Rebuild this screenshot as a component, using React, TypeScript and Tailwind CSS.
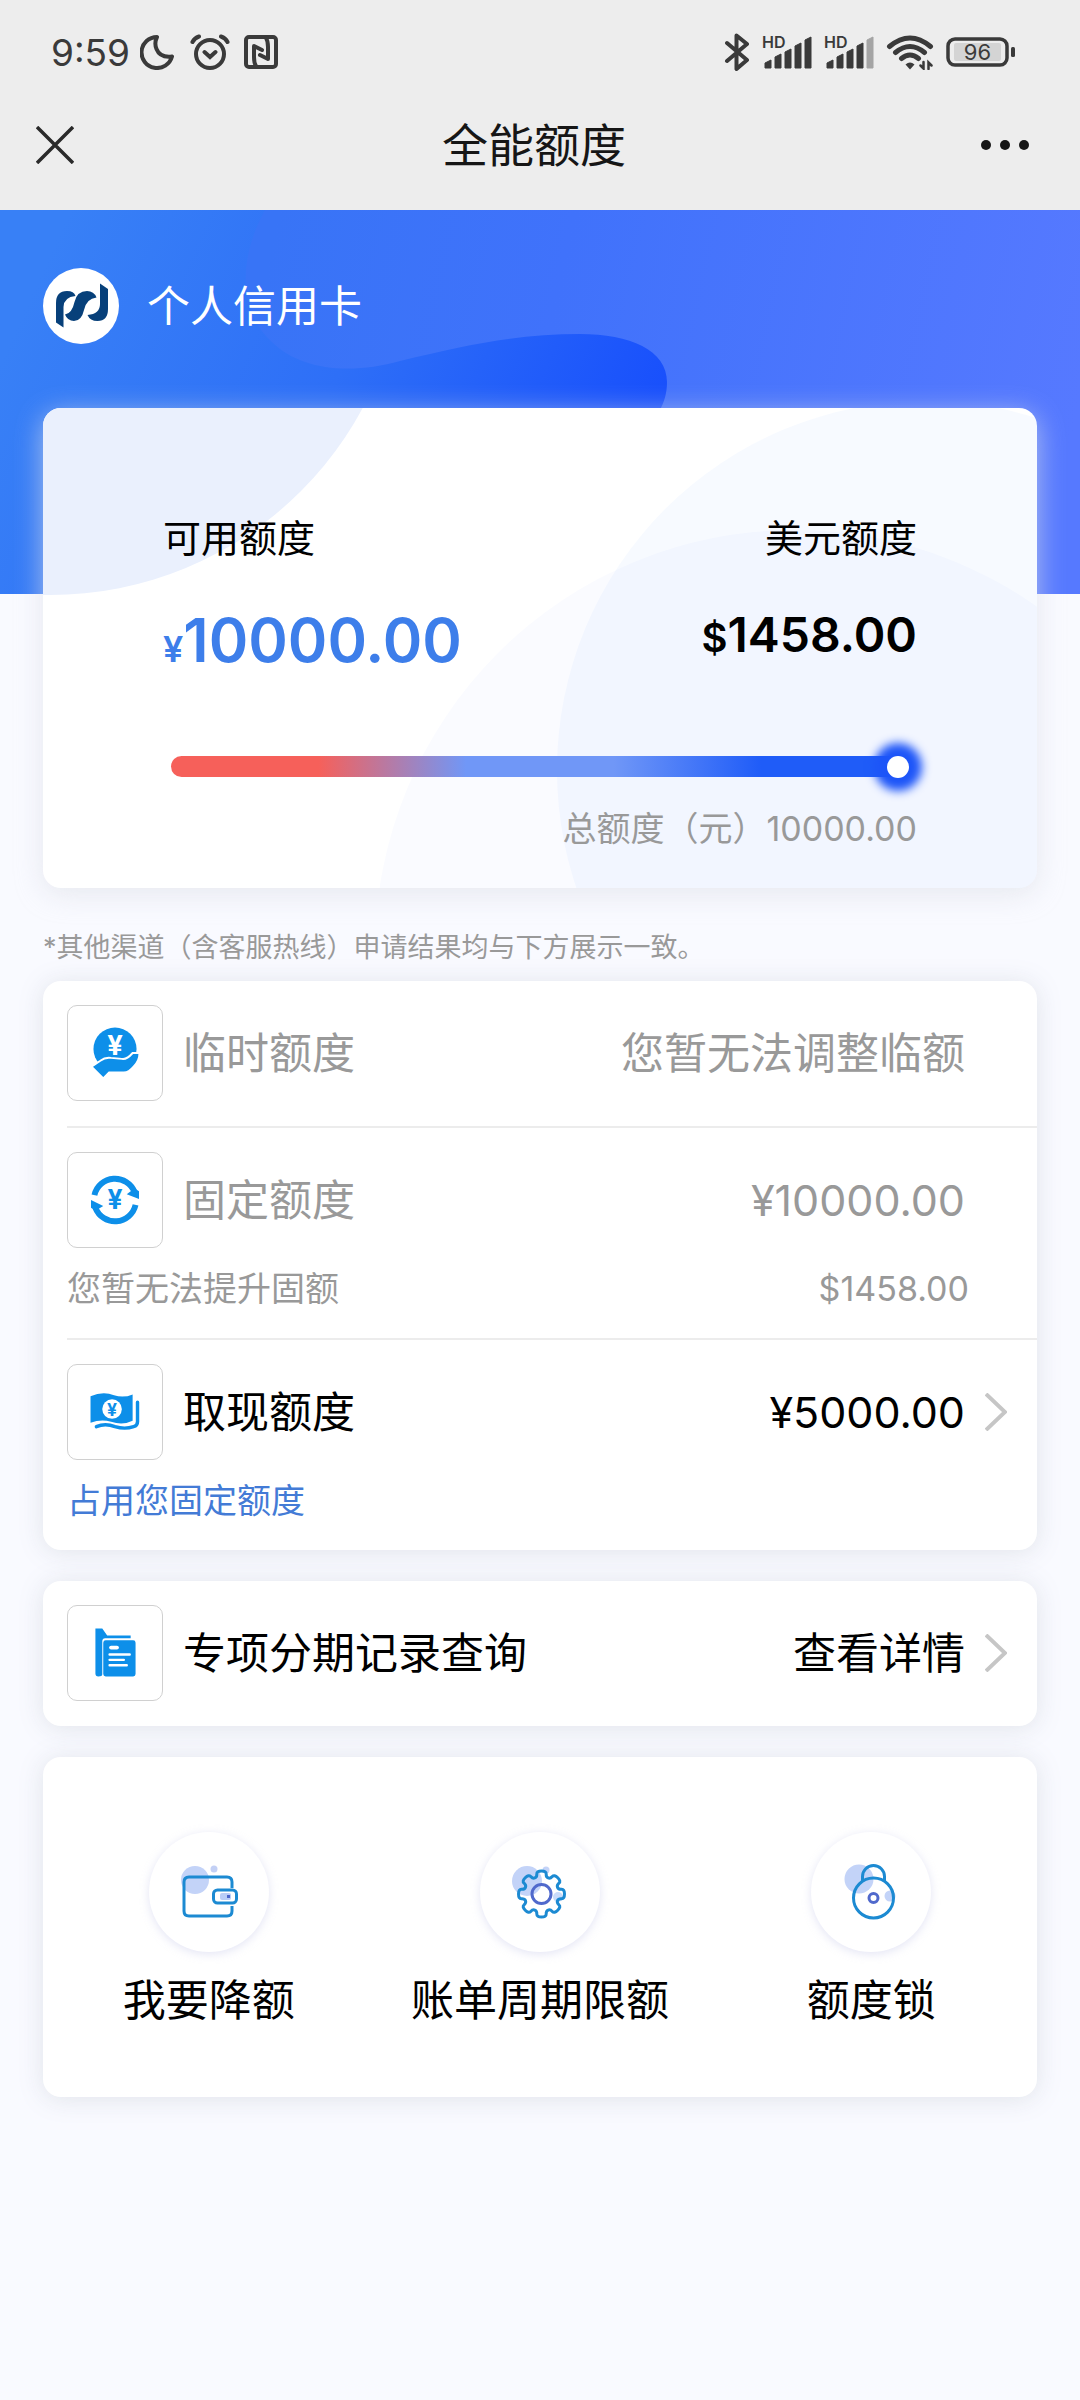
import type { ReactNode } from 'react'

const SHADOW = 'shadow-[0_2px_24px_rgba(222,225,232,0.9)]'

function StatusBar() {
  return (
    <div className="flex h-[104px] items-center justify-between pr-16 pl-[51px] text-[#3a3a3a]">
      <div className="flex items-center gap-[14px]">
        <span className="-mr-1 text-[37px] leading-none">9:59</span>
        <svg className="h-9 w-9" viewBox="0 0 36 36" fill="none" stroke="currentColor" strokeWidth="4" strokeLinejoin="round">
          <path d="M17 3A15.5 15.5 0 1 0 32 22.5Q20 24 16.5 15Q14 9 17 3Z" />
        </svg>
        <svg className="h-9 w-10" viewBox="0 0 40 36" fill="none" stroke="currentColor" strokeWidth="4" strokeLinecap="round">
          <circle cx="20" cy="20" r="14" />
          <path d="M14.5 18L20 23L25.5 18M2.500 8Q4.500 4 9 2.500M37.500 8Q35.500 4 31 2.500" />
        </svg>
        <svg className="h-[34px] w-[34px]" viewBox="0 0 34 34" fill="none" stroke="currentColor" strokeWidth="4" strokeLinecap="round" strokeLinejoin="round">
          <rect x="2" y="2" width="30" height="30" rx="3" />
          <path d="M12 31Q10 28 10 22V11L18 15M22 3Q24 6 24 12V24L16 20" />
        </svg>
      </div>
      <div className="flex items-center gap-3">
        <svg className="h-[38px] w-[26px]" viewBox="0 0 26 38" fill="none" stroke="currentColor" strokeWidth="4" strokeLinecap="round" strokeLinejoin="round">
          <path d="M3 10L23 27L12.500 36V2.500L23 11L3 28" />
        </svg>
        <Signal bars={5} />
        <Signal bars={4} />
        <svg className="h-9 w-12" viewBox="0 0 48 36" fill="none" stroke="currentColor" strokeWidth="5" strokeLinecap="round">
          <path d="M3.500 12.500Q24 -4.500 44.500 12.500M9.500 18.500Q24 6.500 38.500 18.500M15.500 24.500Q24 17.500 32.500 24.500" />
          <path d="M19.500 30.500Q24 26.500 28.500 30.500L24 35.500Z" fill="currentColor" stroke="none" />
          <path d="M37.500 28V34.500L34.500 31.500M42.500 35V28.500L45.500 31.500" strokeWidth="2.500" />
        </svg>
        <svg className="h-[30px] w-[70px]" viewBox="0 0 70 30" fill="none">
          <rect x="2" y="2" width="59" height="26" rx="7" stroke="currentColor" strokeWidth="3.500" />
          <rect x="8" y="6" width="47" height="18" rx="2" fill="#d4d4d4" />
          <rect x="65" y="10" width="4" height="10" rx="1.500" fill="currentColor" />
          <text x="31.500" y="23" textAnchor="middle" fontSize="22" fill="currentColor">96</text>
        </svg>
      </div>
    </div>
  )
}

function Signal({ bars }: { bars: number }) {
  const tops = [26, 20, 15, 9, 3]
  return (
    <svg className="h-[42px] w-[50px]" viewBox="0 -3 50 42" fill="currentColor">
      <text x="0" y="14" fontSize="16" fontWeight="600">HD</text>
      {tops.map((top, i) => {
        const x = 3 + i * 10
        return (
          <path
            key={top}
            d={`M${x} 34V${top + 3}L${x + 6} ${top}V34Z`}
            stroke="currentColor"
            strokeWidth="1"
            strokeLinejoin="round"
            opacity={i < bars ? 1 : 0.4}
          />
        )
      })}
    </svg>
  )
}

function NavBar() {
  return (
    <nav className="grid h-[82px] grid-cols-[1fr_auto_1fr] items-center pr-12 pl-9 text-[#161616]">
      <button type="button" aria-label="关闭" className="justify-self-start">
        <svg className="h-[38px] w-[38px]" viewBox="0 0 38 38" stroke="#2a2a2a" strokeWidth="3.500">
          <path d="M1 1L37 37M37 1L1 37" />
        </svg>
      </button>
      <h1 className="text-[46px] leading-[60px]">全能额度</h1>
      <button type="button" aria-label="更多" className="justify-self-end">
        <svg className="h-3 w-[52px]" viewBox="0 0 52 12" fill="currentColor">
          <circle cx="6" cy="6" r="5" />
          <circle cx="25" cy="6" r="5" />
          <circle cx="44" cy="6" r="5" />
        </svg>
      </button>
    </nav>
  )
}

function HeroBackground() {
  return (
    <svg className="absolute inset-x-0 top-0 h-96 w-full" viewBox="0 0 1080 384" preserveAspectRatio="none">
      <defs>
        <linearGradient id="heroBase" x1="0" y1="0.400" x2="0.620" y2="0.500">
          <stop offset="0" stopColor="#3880f6" />
          <stop offset="0.500" stopColor="#2e6ff7" />
          <stop offset="1" stopColor="#184ffc" />
        </linearGradient>
        <linearGradient id="heroWave" x1="0" y1="0.400" x2="1" y2="0.500">
          <stop offset="0" stopColor="#3874f6" />
          <stop offset="0.350" stopColor="#4072fb" />
          <stop offset="1" stopColor="#5679ff" />
        </linearGradient>
      </defs>
      <rect width="1080" height="384" fill="url(#heroBase)" />
      <path
        d="M265 0C235 55 242 105 272 132C300 160 350 165 400 151C470 134 520 124 580 124C630 124 667 140 667 172C667 184 664 192 660 200V384H1080V0Z"
        fill="url(#heroWave)"
      />
    </svg>
  )
}

function QuotaCard() {
  return (
    <section className="relative mx-[43px] mt-16 rounded-[18px] bg-white px-[120px] pt-[105px] pb-[34px] shadow-[0_6px_28px_rgba(222,225,232,0.7)]">
      <svg className="absolute inset-0 h-full w-full rounded-[18px]" viewBox="0 0 994 480" preserveAspectRatio="none">
        <circle cx="7" cy="-168" r="355" fill="#eaf0fd" />
        <circle cx="883" cy="362" r="369" fill="#176cf5" fillOpacity="0.035" />
        <circle cx="752" cy="542" r="420" fill="#175cf5" fillOpacity="0.025" />
      </svg>
      <div className="relative">
        <div className="flex justify-between text-[38px] leading-[50px] text-black">
          <span>可用额度</span>
          <span>美元额度</span>
        </div>
        <div className="mt-9 flex h-20 items-start justify-between font-semibold">
          <p className="text-[60px] leading-[82px] text-[#3d7eea]">
            <span className="text-[36px] leading-none">¥</span>10000.00
          </p>
          <p className="text-[48px] leading-[72px] text-black">
            <span className="text-[40px] leading-none">$</span>1458.00
          </p>
        </div>
        <div className="mt-[77px] flex px-2">
          <input
            type="range"
            aria-label="可用额度"
            min={0}
            max={10000}
            defaultValue={10000}
            className="h-[21px] w-full appearance-none rounded-full bg-[linear-gradient(90deg,#f6605a_20%,#7097f7_40%,#7097f7_60%,#1f5cf8_80%)] [&::-webkit-slider-thumb]:h-[22px] [&::-webkit-slider-thumb]:w-[22px] [&::-webkit-slider-thumb]:appearance-none [&::-webkit-slider-thumb]:rounded-full [&::-webkit-slider-thumb]:bg-white [&::-webkit-slider-thumb]:shadow-[0_0_10px_13px_#1d55f8]"
          />
        </div>
        <p className="mt-[27px] text-right text-[34px] leading-[50px] text-[#999]">总额度（元）10000.00</p>
      </div>
    </section>
  )
}

function HandIcon() {
  return (
    <>
      <circle cx="48" cy="44" r="22" />
      <text x="48" y="50" textAnchor="middle" fontSize="28" fontWeight="700" fill="#fff">¥</text>
      <path d="M24 62L33 56Q38 52 44 53L55 54Q60 55 66 48H73Q73 56 67 62Q62 68 57 68H42L36 74Z" stroke="#fff" strokeWidth="2" />
    </>
  )
}

function CycleIcon() {
  return (
    <>
      <g fill="none" stroke="#0d8fe9" strokeWidth="6">
        <path d="M27 43A21.500 21.500 0 0 1 68 40" />
        <path d="M69 53A21.500 21.500 0 0 1 28 56" />
      </g>
      <path d="M60 42L72.500 47V39L68 36Z" />
      <path d="M36 54L23.500 48V56L28 59Z" />
      <text x="48" y="57" textAnchor="middle" fontSize="27" fontWeight="700">¥</text>
    </>
  )
}

function CashIcon() {
  return (
    <>
      <path d="M23 32Q36 26 47 31Q57 34 66 30V57Q56 62 44 58Q34 55 23 59Z" />
      <circle cx="45" cy="45" r="10" fill="#fff" />
      <text x="45" y="52" textAnchor="middle" fontSize="18" fontWeight="700">¥</text>
      <path d="M29 63Q38 59 48 63Q58 66 67 63Q71 62 71 58V38" fill="none" stroke="#0d8fe9" strokeWidth="3.500" strokeLinecap="round" />
    </>
  )
}

function RecordIcon() {
  return (
    <>
      <path d="M28 23H35L40 30H64V33H38Q35 33 35 36V70Q35 72 31 72Q28 72 28 69Z" />
      <rect x="36" y="35" width="33" height="37" rx="2.500" />
      <path d="M42.500 49.500H63M42.500 55H57M42.500 60.500H60" stroke="#fff" strokeWidth="2.500" strokeLinecap="round" />
      <path d="M44 42.500H50" stroke="#fff" strokeWidth="4" strokeLinecap="round" />
    </>
  )
}

function Chevron() {
  return (
    <svg className="h-[38px] w-[22px]" viewBox="0 0 22 38" fill="none" stroke="#c6c6c6" strokeWidth="4">
      <path d="M1 1L20 19L1 37" />
    </svg>
  )
}

type RowProps = {
  icon: ReactNode
  title: string
  value: string
  muted?: boolean
  href?: string
  children?: ReactNode
}

function Row({ icon, title, value, muted, href, children }: RowProps) {
  const body = (
    <>
      <div className="flex items-center gap-5 pr-[30px]">
        <svg className="h-24 w-24 rounded-[10px] border border-[#d0d0d0]" viewBox="0 0 96 96" fill="#0d8fe9">
          {icon}
        </svg>
        <span className="flex-1">{title}</span>
        <span>{value}</span>
        {href ? <Chevron /> : <span className="w-[22px]" />}
      </div>
      {children && (
        <div className="mt-4 flex justify-between pr-[68px] text-[34px] leading-[49px]">{children}</div>
      )}
    </>
  )
  const tone = muted ? 'text-[#999]' : 'text-black'
  return (
    <li className={`pt-6 pb-[25px] text-[43px] leading-[64px] ${tone}`}>
      {href ? <a href={href} className="block">{body}</a> : body}
    </li>
  )
}

function WalletIcon() {
  return (
    <>
      <circle cx="46" cy="48" r="14" fill="#c3d3f8" stroke="none" />
      <circle cx="65" cy="37" r="3.500" fill="#c3d0f5" stroke="none" />
      <path d="M83 56V50Q83 45 78 45H40Q35 45 35 50V79Q35 84 40 84H78Q83 84 83 79V74" />
      <rect x="64.500" y="58" width="23" height="13" rx="4" />
      <rect x="71" y="61" width="11" height="7" rx="2" fill="#b9cdf7" stroke="none" />
      <path d="M78 64.500H81" stroke="#4a66cc" />
    </>
  )
}

// Eight rounded teeth, smoothed through the midpoints of a polar outline
function gearPath(cx: number, cy: number) {
  const pts: [number, number][] = []
  for (let i = 0; i < 8; i++) {
    const shape: [number, number][] = [[-15, 17.5], [-12, 23.5], [12, 23.5], [15, 17.5]]
    shape.forEach(([deg, r]) => {
      const a = ((i * 45 + deg) * Math.PI) / 180
      pts.push([cx + r * Math.cos(a), cy + r * Math.sin(a)])
    })
  }
  const mid = (a: [number, number], b: [number, number]) => `${(a[0] + b[0]) / 2} ${(a[1] + b[1]) / 2}`
  const n = pts.length
  let d = `M${mid(pts[n - 1], pts[0])}`
  pts.forEach((p, i) => {
    d += `Q${p[0]} ${p[1]} ${mid(p, pts[(i + 1) % n])}`
  })
  return d + 'Z'
}

function GearIcon() {
  return (
    <>
      <circle cx="47" cy="49" r="15" fill="#c3d3f8" stroke="none" />
      <circle cx="66" cy="38" r="3.500" fill="#c3d3f8" stroke="none" />
      <circle cx="78" cy="65" r="5" fill="#c9dbfa" stroke="none" />
      <path d={gearPath(61.5, 62)} />
      <circle cx="61.500" cy="62" r="9.500" stroke="#5069cc" />
    </>
  )
}

function LockIcon() {
  return (
    <>
      <circle cx="48" cy="47" r="14.500" fill="#c3d3f8" stroke="none" />
      <circle cx="79" cy="64" r="5.500" fill="#c3d3f8" stroke="none" />
      <path d="M51.500 49V44.500A11 11 0 0 1 73.500 44.500V49" />
      <circle cx="62.500" cy="66" r="20" />
      <circle cx="62.500" cy="66" r="4.500" stroke="#5069cc" />
    </>
  )
}

function Action({ icon, label }: { icon: ReactNode; label: string }) {
  return (
    <button type="button" className="flex flex-col items-center">
      <svg
        className="h-[120px] w-[120px] rounded-full shadow-[0_2px_10px_rgba(215,217,240,0.7)]"
        viewBox="0 0 120 120"
        fill="none"
        stroke="#1c8ad2"
        strokeWidth="3"
      >
        {icon}
      </svg>
      <span className="mt-4 text-[43px] leading-[64px] text-black">{label}</span>
    </button>
  )
}

export default function App() {
  return (
    <div className="min-h-screen bg-[#f9faff] pb-16 font-[Inter,'Noto_Sans_CJK_SC',sans-serif]">
      <header className="bg-[#ededed] pb-6">
        <StatusBar />
        <NavBar />
      </header>

      <main className="relative pt-[58px]">
        <HeroBackground />
        <div className="relative flex items-center gap-7 px-[43px]">
          <svg className="h-[76px] w-[76px]" viewBox="0 0 76 76">
            <circle cx="38" cy="38" r="38" fill="#fff" />
            <g fill="#07407a">
              <path d="M13 54.500V35Q13 23 24 23Q31 23 32.500 28Q21 29 20.500 39V59.500Z" />
              <path d="M53.500 29.500Q51 23 44 23Q34 23 31.500 34Q29 45.500 22 46.500Q24.500 53 31 53Q38.500 53 41 42Q43.500 30.500 53.500 29.500Z" />
              <path d="M57 15.500L65 21V41Q65 53 54.500 53Q47 53 44.500 47Q57 46 57 36Z" />
            </g>
          </svg>
          <h2 className="text-[43px] leading-[64px] text-white">个人信用卡</h2>
        </div>

        <QuotaCard />

        <p className="mx-[43px] mt-10 text-[27px] leading-10 text-[#999]">
          *其他渠道（含客服热线）申请结果均与下方展示一致。
        </p>

        <ul className={`mx-[43px] mt-[13px] divide-y-2 divide-[#ececec] rounded-[18px] bg-white pl-6 ${SHADOW}`}>
          <Row icon={<HandIcon />} title="临时额度" value="您暂无法调整临额" muted />
          <Row icon={<CycleIcon />} title="固定额度" value="¥10000.00" muted>
            <span>您暂无法提升固额</span>
            <span>$1458.00</span>
          </Row>
          <Row icon={<CashIcon />} title="取现额度" value="¥5000.00" href="#cash">
            <span className="text-[#437bd6]">占用您固定额度</span>
          </Row>
        </ul>

        <ul className={`mx-[43px] mt-[31px] rounded-[18px] bg-white pl-6 ${SHADOW}`}>
          <Row icon={<RecordIcon />} title="专项分期记录查询" value="查看详情" href="#records" />
        </ul>

        <section className={`mx-[43px] mt-[31px] grid grid-cols-3 rounded-[18px] bg-white pt-[75px] pb-[65px] ${SHADOW}`}>
          <Action icon={<WalletIcon />} label="我要降额" />
          <Action icon={<GearIcon />} label="账单周期限额" />
          <Action icon={<LockIcon />} label="额度锁" />
        </section>
      </main>
    </div>
  )
}
